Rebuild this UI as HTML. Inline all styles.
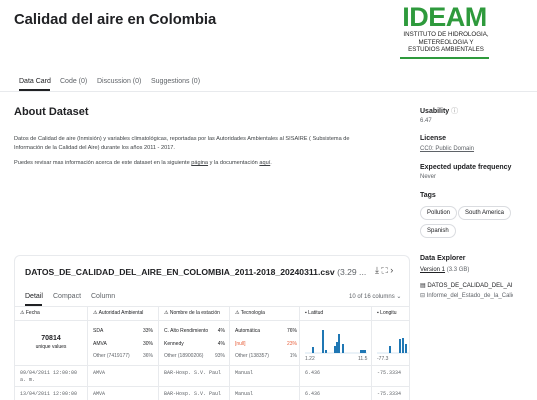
<!DOCTYPE html>
<html style="height:400px;overflow:hidden"><head><style>
*{margin:0;padding:0;box-sizing:border-box}
body{width:537px;height:400px;overflow:hidden;background:#fff;font-family:"Liberation Sans",sans-serif;color:#202124;position:relative}
.a{position:absolute;white-space:nowrap}
.s{font-size:6px;color:#5f6368}
.mono{font-family:"Liberation Mono",monospace;font-size:5px;color:#5f6368}
.pill{position:absolute;height:14px;border:1px solid #dadce0;border-radius:7px;font-size:6px;line-height:12px;padding:0 6px;color:#202124}
.vl{position:absolute;width:1px;background:#e8eaed}
.hl{position:absolute;height:1px;background:#e8eaed}
</style></head><body>
<div class="a" style="left:14px;top:12px;font-size:14.8px;font-weight:bold">Calidad del aire en Colombia</div>
<div class="a" style="left:388px;top:2px;width:113px;text-align:center;font-size:27px;font-weight:bold;color:#2e9a3c;letter-spacing:-0.5px">IDEAM</div>
<div class="a" style="left:392px;top:31px;width:108px;text-align:center;font-size:6.2px;line-height:7.5px;color:#222">INSTITUTO DE HIDROLOGIA,<br>METEREOLOGIA Y<br>ESTUDIOS AMBIENTALES</div>
<div class="a" style="left:400px;top:57px;width:89px;height:2px;background:#2e9a3c"></div>
<div class="a" style="left:19px;top:78px;font-size:7px;color:#202124">Data Card</div>
<div class="a" style="left:19px;top:89px;width:31px;height:2px;background:#202124"></div>
<div class="a" style="left:60px;top:78px;font-size:7px;color:#5f6368">Code (0)</div>
<div class="a" style="left:97px;top:78px;font-size:7px;color:#5f6368">Discussion (0)</div>
<div class="a" style="left:151px;top:78px;font-size:7px;color:#5f6368">Suggestions (0)</div>
<div class="hl" style="left:0;top:91px;width:537px"></div>
<div class="a" style="left:14px;top:106px;font-size:11px;font-weight:bold">About Dataset</div>
<div class="a" style="left:14px;top:135px;font-size:5.6px;line-height:9px;color:#3c4043">Datos de Calidad de aire (Inmisión) y variables climatológicas, reportadas por las Autoridades Ambientales al SISAIRE ( Subsistema de<br>Información de la Calidad del Aire) durante los años 2011 - 2017.</div>
<div class="a" style="left:14px;top:160px;font-size:5.6px;color:#3c4043">Puedes revisar mas información acerca de este dataset en la siguiente <u>página</u> y la documentación <u>aquí</u>.</div>
<div class="a" style="left:420px;top:106px;font-size:7px;font-weight:bold">Usability <span style="font-weight:normal;color:#999">ⓘ</span></div>
<div class="a s" style="left:420px;top:118px">6.47</div>
<div class="a" style="left:420px;top:135px;font-size:7px;font-weight:bold">License</div>
<div class="a s" style="left:420px;top:146px;text-decoration:underline">CC0: Public Domain</div>
<div class="a" style="left:420px;top:164px;font-size:7px;font-weight:bold">Expected update frequency</div>
<div class="a s" style="left:420px;top:174px">Never</div>
<div class="a" style="left:420px;top:192px;font-size:7px;font-weight:bold">Tags</div>
<div class="pill" style="left:420px;top:206px">Pollution</div>
<div class="pill" style="left:458px;top:206px">South America</div>
<div class="pill" style="left:420px;top:224px">Spanish</div>
<div class="a" style="left:420px;top:255px;font-size:7px;font-weight:bold">Data Explorer</div>
<div class="a s" style="left:420px;top:267px;color:#202124"><u>Version 1</u> <span style="color:#5f6368">(3.3 GB)</span></div>
<div class="a" style="left:420px;top:282px;font-size:6px;color:#202124;width:93px;overflow:hidden">▤ DATOS_DE_CALIDAD_DEL_AIRE</div>
<div class="a s" style="left:420px;top:292px;width:93px;overflow:hidden">⊟ Informe_del_Estado_de_la_Calidad</div>
<div class="a" style="left:14px;top:255px;width:396px;height:145px;border:1px solid #e8eaed;border-bottom:none;border-radius:6px 6px 0 0;overflow:hidden">
 <div class="a" style="left:10px;top:11px;font-size:8.6px;font-weight:bold">DATOS_DE_CALIDAD_DEL_AIRE_EN_COLOMBIA_2011-2018_20240311.csv <span style="font-weight:normal;color:#5f6368">(3.29 ...</span></div>
 <div class="a" style="left:358px;top:9px;font-size:9px;color:#444;background:#fff;padding-left:2px">⤓ ⛶ ›</div>
 <div class="a" style="left:10px;top:37px;font-size:7px">Detail</div>
 <div class="a" style="left:10px;top:48px;width:17px;height:2px;background:#202124"></div>
 <div class="a" style="left:38px;top:37px;font-size:7px;color:#5f6368">Compact</div>
 <div class="a" style="left:76px;top:37px;font-size:7px;color:#5f6368">Column</div>
 <div class="a s" style="left:334px;top:37px">10 of 16 columns ⌄</div>
 <div class="hl" style="left:0;top:50px;width:396px"></div>
 <div class="hl" style="left:0;top:64px;width:396px"></div>
 <div class="hl" style="left:0;top:109px;width:396px"></div>
 <div class="hl" style="left:0;top:130px;width:396px"></div>
 <div class="vl" style="left:72px;top:50px;height:100px"></div>
 <div class="vl" style="left:143px;top:50px;height:100px"></div>
 <div class="vl" style="left:214px;top:50px;height:100px"></div>
 <div class="vl" style="left:284px;top:50px;height:100px"></div>
 <div class="vl" style="left:356px;top:50px;height:100px"></div>
 <div class="a" style="left:5px;top:54px;font-size:5px">⚠ Fecha</div>
 <div class="a" style="left:78px;top:54px;font-size:5px">⚠ Autoridad Ambiental</div>
 <div class="a" style="left:149px;top:54px;font-size:5px">⚠ Nombre de la estación</div>
 <div class="a" style="left:220px;top:54px;font-size:5px">⚠ Tecnología</div>
 <div class="a" style="left:290px;top:54px;font-size:5px">▪ Latitud</div>
 <div class="a" style="left:362px;top:54px;font-size:5px">▪ Longitu</div>
 <div class="a" style="left:0;top:79px;width:72px;text-align:center;font-size:7px;font-weight:bold">70814</div>
 <div class="a" style="left:0;top:88px;width:72px;text-align:center;font-size:5px">unique values</div>
 <div class="a" style="left:78px;top:69px;width:60px;font-size:5px;line-height:12.5px"><div>SDA<span style="float:right">33%</span></div><div>AMVA<span style="float:right">30%</span></div><div style="color:#5f6368">Other (7419177)<span style="float:right">36%</span></div></div>
 <div class="a" style="left:149px;top:69px;width:61px;font-size:5px;line-height:12.5px"><div>C. Alto Rendimiento<span style="float:right">4%</span></div><div>Kennedy<span style="float:right">4%</span></div><div style="color:#5f6368">Other (18900206)<span style="float:right">93%</span></div></div>
 <div class="a" style="left:220px;top:69px;width:62px;font-size:5px;line-height:12.5px"><div>Automática<span style="float:right">76%</span></div><div style="color:#e8603c">[null]<span style="float:right">23%</span></div><div style="color:#5f6368">Other (138357)<span style="float:right">1%</span></div></div>
 <svg class="a" style="left:290px;top:66px" width="64" height="32"><line x1="0" y1="31" x2="62" y2="31" stroke="#d4e6f0"/><g fill="#1f77b4"><rect x="7" y="25" width="2" height="6"/><rect x="17" y="8" width="2" height="23"/><rect x="29" y="24" width="2" height="7"/><rect x="31" y="20" width="2" height="11"/><rect x="33" y="12" width="2" height="19"/><rect x="37" y="22" width="2" height="9"/><rect x="55" y="28" width="6" height="3"/><rect x="20" y="28" width="2" height="3"/></g></svg>
 <div class="a" style="left:290px;top:100px;font-size:5px;color:#5f6368">1.22</div>
 <div class="a" style="left:343px;top:100px;font-size:5px;color:#5f6368">11.5</div>
 <svg class="a" style="left:362px;top:66px" width="34" height="32"><line x1="0" y1="31" x2="34" y2="31" stroke="#d4e6f0"/><g fill="#1f77b4"><rect x="12" y="24" width="2" height="7"/><rect x="22" y="17" width="2" height="14"/><rect x="25" y="16" width="2" height="15"/><rect x="28" y="22" width="2" height="9"/></g></svg>
 <div class="a" style="left:362px;top:100px;font-size:5px;color:#5f6368">-77.3</div>
 <div class="a mono" style="left:5px;top:114px;line-height:7px">09/04/2011 12:00:00<br>a. m.</div>
 <div class="a mono" style="left:78px;top:114px">AMVA</div>
 <div class="a mono" style="left:149px;top:114px">BAR-Hosp. S.V. Paul</div>
 <div class="a mono" style="left:220px;top:114px">Manual</div>
 <div class="a mono" style="left:290px;top:114px">6.436</div>
 <div class="a mono" style="left:362px;top:114px">-75.3334</div>
 <div class="a mono" style="left:5px;top:135px">13/04/2011 12:00:00</div>
 <div class="a mono" style="left:78px;top:135px">AMVA</div>
 <div class="a mono" style="left:149px;top:135px">BAR-Hosp. S.V. Paul</div>
 <div class="a mono" style="left:220px;top:135px">Manual</div>
 <div class="a mono" style="left:290px;top:135px">6.436</div>
 <div class="a mono" style="left:362px;top:135px">-75.3334</div>
</div>
</body></html>
